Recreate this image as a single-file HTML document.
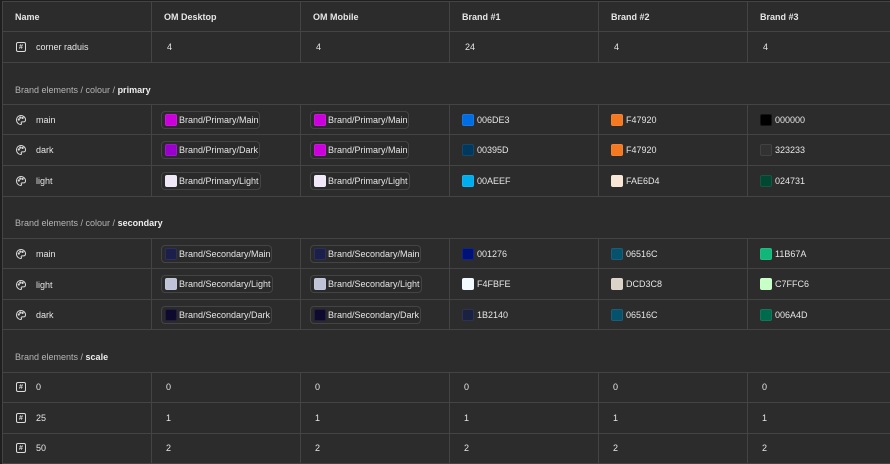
<!DOCTYPE html>
<html><head><meta charset="utf-8"><style>
*{margin:0;padding:0;box-sizing:border-box}
body{width:890px;height:464px;background:#1f1f1f;font-family:"Liberation Sans",Arial,sans-serif;font-size:9px;color:#e6e6e6;position:relative;overflow:hidden}
#t{position:absolute;left:2px;top:1px;width:888px;height:463px;background:#2c2c2c}
.h{position:absolute;left:2px;width:888px;height:1px;background:#444}
.v{position:absolute;width:1px;background:#444}
.x{position:absolute;white-space:nowrap;line-height:10px}
.b{font-weight:bold}
.s{color:#b5b5b5}
.chip{position:absolute;height:18px;border:1px solid #444;border-radius:4px;background:#2a2a2a;padding-left:17px;line-height:16px;white-space:nowrap;color:#e6e6e6;overflow:hidden}
.chip i,.sw{position:absolute;width:12px;height:12px;border-radius:2px;border:1px solid rgba(255,255,255,.08)}
.chip i{left:3px;top:2px}
.ic{position:absolute;left:16px;width:10px;height:10px;border:1.2px solid #ddd;border-radius:2px;font-size:7px;display:flex;align-items:center;justify-content:center;font-weight:bold;color:#ddd;line-height:1}
svg.p{position:absolute;left:15px}
</style></head><body>
<div id="t"></div>
<div class="h" style="top:1px"></div>
<div class="h" style="top:31px"></div>
<div class="h" style="top:62px"></div>
<div class="h" style="top:104px"></div>
<div class="h" style="top:134px"></div>
<div class="h" style="top:165px"></div>
<div class="h" style="top:196px"></div>
<div class="h" style="top:238px"></div>
<div class="h" style="top:268px"></div>
<div class="h" style="top:299px"></div>
<div class="h" style="top:329px"></div>
<div class="h" style="top:372px"></div>
<div class="h" style="top:402px"></div>
<div class="h" style="top:433px"></div>
<div class="h" style="top:463px"></div>
<div class="v" style="left:2px;top:1px;height:463px"></div>
<div class="v" style="left:151px;top:1px;height:61px"></div><div class="v" style="left:300px;top:1px;height:61px"></div><div class="v" style="left:449px;top:1px;height:61px"></div><div class="v" style="left:598px;top:1px;height:61px"></div><div class="v" style="left:747px;top:1px;height:61px"></div>
<div class="v" style="left:151px;top:104px;height:92px"></div><div class="v" style="left:300px;top:104px;height:92px"></div><div class="v" style="left:449px;top:104px;height:92px"></div><div class="v" style="left:598px;top:104px;height:92px"></div><div class="v" style="left:747px;top:104px;height:92px"></div>
<div class="v" style="left:151px;top:238px;height:91px"></div><div class="v" style="left:300px;top:238px;height:91px"></div><div class="v" style="left:449px;top:238px;height:91px"></div><div class="v" style="left:598px;top:238px;height:91px"></div><div class="v" style="left:747px;top:238px;height:91px"></div>
<div class="v" style="left:151px;top:372px;height:92px"></div><div class="v" style="left:300px;top:372px;height:92px"></div><div class="v" style="left:449px;top:372px;height:92px"></div><div class="v" style="left:598px;top:372px;height:92px"></div><div class="v" style="left:747px;top:372px;height:92px"></div>

<div class="x b" style="left:15px;top:12px">Name</div>
<div class="x b" style="left:164px;top:12px">OM Desktop</div>
<div class="x b" style="left:313px;top:12px">OM Mobile</div>
<div class="x b" style="left:462px;top:12px">Brand #1</div>
<div class="x b" style="left:611px;top:12px">Brand #2</div>
<div class="x b" style="left:760px;top:12px">Brand #3</div>

<div class="ic" style="top:42px">#</div>
<div class="x" style="left:36px;top:42px">corner raduis</div>
<div class="x" style="left:167px;top:42px">4</div>
<div class="x" style="left:316px;top:42px">4</div>
<div class="x" style="left:465px;top:42px">24</div>
<div class="x" style="left:614px;top:42px">4</div>
<div class="x" style="left:763px;top:42px">4</div>

<div class="x s" style="left:15px;top:85px">Brand elements / colour / <span class="b" style="color:#eee">primary</span></div>

<svg class="p" style="top:114px" width="12" height="12" viewBox="0 0 12 12" fill="none" stroke="#ddd" stroke-width="1"><path d="M6 1.5C3.3 1.5 1.5 3.5 1.5 6s2 4.5 4.3 4.5c.8 0 .9-.8.5-1.3-.4-.6 0-1.3.8-1.3h1.4c1.5 0 2-1 2-2.2C10.5 3.3 8.5 1.5 6 1.5z"/><circle cx="3.8" cy="5.5" r=".6"/><circle cx="5.3" cy="3.6" r=".6"/><circle cx="7.6" cy="3.9" r=".6"/></svg>
<div class="x" style="left:36px;top:115px">main</div>
<div class="chip" style="left:161px;top:111px;width:99px"><i style="background:#cc00dd"></i>Brand/Primary/Main</div>
<div class="chip" style="left:310px;top:111px;width:99px"><i style="background:#cc00dd"></i>Brand/Primary/Main</div>
<div class="sw" style="left:462px;top:114px;background:#006de3"></div><div class="x" style="left:477px;top:115px">006DE3</div>
<div class="sw" style="left:611px;top:114px;background:#f47920"></div><div class="x" style="left:626px;top:115px">F47920</div>
<div class="sw" style="left:760px;top:114px;background:#000"></div><div class="x" style="left:775px;top:115px">000000</div>

<svg class="p" style="top:144px" width="12" height="12" viewBox="0 0 12 12" fill="none" stroke="#ddd" stroke-width="1"><path d="M6 1.5C3.3 1.5 1.5 3.5 1.5 6s2 4.5 4.3 4.5c.8 0 .9-.8.5-1.3-.4-.6 0-1.3.8-1.3h1.4c1.5 0 2-1 2-2.2C10.5 3.3 8.5 1.5 6 1.5z"/><circle cx="3.8" cy="5.5" r=".6"/><circle cx="5.3" cy="3.6" r=".6"/><circle cx="7.6" cy="3.9" r=".6"/></svg>
<div class="x" style="left:36px;top:145px">dark</div>
<div class="chip" style="left:161px;top:141px;width:99px"><i style="background:#9900cc"></i>Brand/Primary/Dark</div>
<div class="chip" style="left:310px;top:141px;width:99px"><i style="background:#cc00dd"></i>Brand/Primary/Main</div>
<div class="sw" style="left:462px;top:144px;background:#00395d"></div><div class="x" style="left:477px;top:145px">00395D</div>
<div class="sw" style="left:611px;top:144px;background:#f47920"></div><div class="x" style="left:626px;top:145px">F47920</div>
<div class="sw" style="left:760px;top:144px;background:#323233"></div><div class="x" style="left:775px;top:145px">323233</div>

<svg class="p" style="top:175px" width="12" height="12" viewBox="0 0 12 12" fill="none" stroke="#ddd" stroke-width="1"><path d="M6 1.5C3.3 1.5 1.5 3.5 1.5 6s2 4.5 4.3 4.5c.8 0 .9-.8.5-1.3-.4-.6 0-1.3.8-1.3h1.4c1.5 0 2-1 2-2.2C10.5 3.3 8.5 1.5 6 1.5z"/><circle cx="3.8" cy="5.5" r=".6"/><circle cx="5.3" cy="3.6" r=".6"/><circle cx="7.6" cy="3.9" r=".6"/></svg>
<div class="x" style="left:36px;top:176px">light</div>
<div class="chip" style="left:161px;top:172px;width:100px"><i style="background:#f0e8f8"></i>Brand/Primary/Light</div>
<div class="chip" style="left:310px;top:172px;width:100px"><i style="background:#f0e8f8"></i>Brand/Primary/Light</div>
<div class="sw" style="left:462px;top:175px;background:#00aeef"></div><div class="x" style="left:477px;top:176px">00AEEF</div>
<div class="sw" style="left:611px;top:175px;background:#fae6d4"></div><div class="x" style="left:626px;top:176px">FAE6D4</div>
<div class="sw" style="left:760px;top:175px;background:#024731"></div><div class="x" style="left:775px;top:176px">024731</div>

<div class="x s" style="left:15px;top:218px">Brand elements / colour / <span class="b" style="color:#eee">secondary</span></div>

<svg class="p" style="top:248px" width="12" height="12" viewBox="0 0 12 12" fill="none" stroke="#ddd" stroke-width="1"><path d="M6 1.5C3.3 1.5 1.5 3.5 1.5 6s2 4.5 4.3 4.5c.8 0 .9-.8.5-1.3-.4-.6 0-1.3.8-1.3h1.4c1.5 0 2-1 2-2.2C10.5 3.3 8.5 1.5 6 1.5z"/><circle cx="3.8" cy="5.5" r=".6"/><circle cx="5.3" cy="3.6" r=".6"/><circle cx="7.6" cy="3.9" r=".6"/></svg>
<div class="x" style="left:36px;top:249px">main</div>
<div class="chip" style="left:161px;top:245px;width:111px"><i style="background:#1b1f4a"></i>Brand/Secondary/Main</div>
<div class="chip" style="left:310px;top:245px;width:111px"><i style="background:#1b1f4a"></i>Brand/Secondary/Main</div>
<div class="sw" style="left:462px;top:248px;background:#001276"></div><div class="x" style="left:477px;top:249px">001276</div>
<div class="sw" style="left:611px;top:248px;background:#06516c"></div><div class="x" style="left:626px;top:249px">06516C</div>
<div class="sw" style="left:760px;top:248px;background:#11b67a"></div><div class="x" style="left:775px;top:249px">11B67A</div>

<svg class="p" style="top:279px" width="12" height="12" viewBox="0 0 12 12" fill="none" stroke="#ddd" stroke-width="1"><path d="M6 1.5C3.3 1.5 1.5 3.5 1.5 6s2 4.5 4.3 4.5c.8 0 .9-.8.5-1.3-.4-.6 0-1.3.8-1.3h1.4c1.5 0 2-1 2-2.2C10.5 3.3 8.5 1.5 6 1.5z"/><circle cx="3.8" cy="5.5" r=".6"/><circle cx="5.3" cy="3.6" r=".6"/><circle cx="7.6" cy="3.9" r=".6"/></svg>
<div class="x" style="left:36px;top:280px">light</div>
<div class="chip" style="left:161px;top:275px;width:112px"><i style="background:#c0c3d8"></i>Brand/Secondary/Light</div>
<div class="chip" style="left:310px;top:275px;width:112px"><i style="background:#c0c3d8"></i>Brand/Secondary/Light</div>
<div class="sw" style="left:462px;top:278px;background:#f4fbfe"></div><div class="x" style="left:477px;top:279px">F4FBFE</div>
<div class="sw" style="left:611px;top:278px;background:#dcd3c8"></div><div class="x" style="left:626px;top:279px">DCD3C8</div>
<div class="sw" style="left:760px;top:278px;background:#c7ffc6"></div><div class="x" style="left:775px;top:279px">C7FFC6</div>

<svg class="p" style="top:309px" width="12" height="12" viewBox="0 0 12 12" fill="none" stroke="#ddd" stroke-width="1"><path d="M6 1.5C3.3 1.5 1.5 3.5 1.5 6s2 4.5 4.3 4.5c.8 0 .9-.8.5-1.3-.4-.6 0-1.3.8-1.3h1.4c1.5 0 2-1 2-2.2C10.5 3.3 8.5 1.5 6 1.5z"/><circle cx="3.8" cy="5.5" r=".6"/><circle cx="5.3" cy="3.6" r=".6"/><circle cx="7.6" cy="3.9" r=".6"/></svg>
<div class="x" style="left:36px;top:310px">dark</div>
<div class="chip" style="left:161px;top:306px;width:111px"><i style="background:#0e0a2e"></i>Brand/Secondary/Dark</div>
<div class="chip" style="left:310px;top:306px;width:111px"><i style="background:#0e0a2e"></i>Brand/Secondary/Dark</div>
<div class="sw" style="left:462px;top:309px;background:#1b2140"></div><div class="x" style="left:477px;top:310px">1B2140</div>
<div class="sw" style="left:611px;top:309px;background:#06516c"></div><div class="x" style="left:626px;top:310px">06516C</div>
<div class="sw" style="left:760px;top:309px;background:#006a4d"></div><div class="x" style="left:775px;top:310px">006A4D</div>

<div class="x s" style="left:15px;top:352px">Brand elements / <span class="b" style="color:#eee">scale</span></div>

<div class="ic" style="top:382px">#</div>
<div class="x" style="left:36px;top:382px">0</div>
<div class="x" style="left:166px;top:382px">0</div><div class="x" style="left:315px;top:382px">0</div><div class="x" style="left:464px;top:382px">0</div><div class="x" style="left:613px;top:382px">0</div><div class="x" style="left:762px;top:382px">0</div>

<div class="ic" style="top:413px">#</div>
<div class="x" style="left:36px;top:413px">25</div>
<div class="x" style="left:166px;top:413px">1</div><div class="x" style="left:315px;top:413px">1</div><div class="x" style="left:464px;top:413px">1</div><div class="x" style="left:613px;top:413px">1</div><div class="x" style="left:762px;top:413px">1</div>

<div class="ic" style="top:443px">#</div>
<div class="x" style="left:36px;top:443px">50</div>
<div class="x" style="left:166px;top:443px">2</div><div class="x" style="left:315px;top:443px">2</div><div class="x" style="left:464px;top:443px">2</div><div class="x" style="left:613px;top:443px">2</div><div class="x" style="left:762px;top:443px">2</div>
</body></html>
